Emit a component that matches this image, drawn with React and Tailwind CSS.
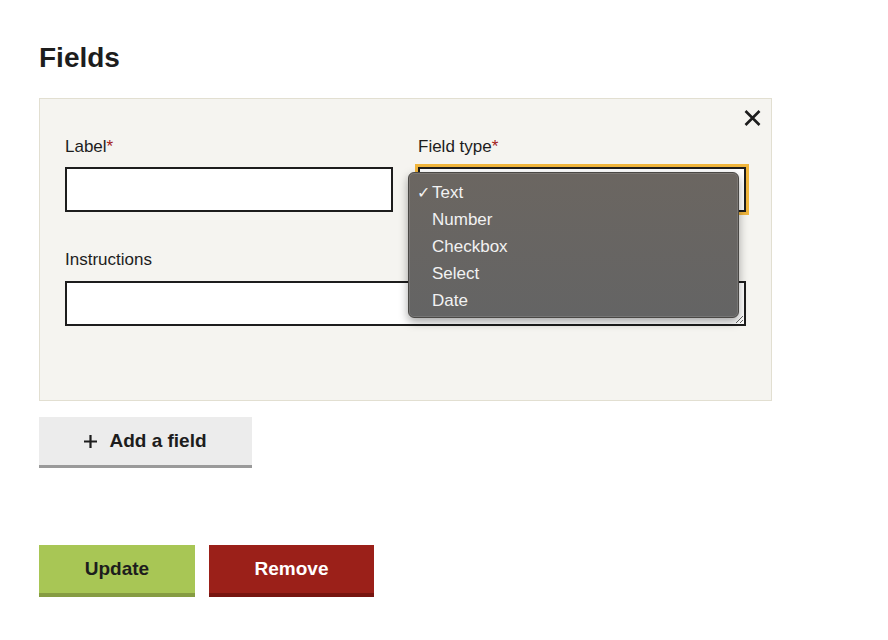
import React from "react";

export default function App() {
  const items = ["Text", "Number", "Checkbox", "Select", "Date"];
  return (
    <div className="min-h-[640px] w-[888px] bg-white pt-[38px] pl-[39px] text-[#1d1d1d]" style={{ fontFamily: '"Liberation Sans", Arial, sans-serif' }}>
      <h2 className="text-[28px] font-bold leading-[40px] text-[#1d1d1d]">Fields</h2>
      <div className="mt-[20px] w-[733px] border border-[#e2dfd1] bg-[#f5f4f0] px-[25px] pt-[11px] pb-[74px]">
        <div className="-mr-[15px] flex h-[16px] justify-end">
          <svg width="17" height="16" viewBox="0 0 17 16" className="block">
            <path d="M1.5 1 L15.5 15 M15.5 1 L1.5 15" stroke="#1d1d1d" strokeWidth="2.6" />
          </svg>
        </div>
        <div className="mt-[9px] grid grid-cols-[328px_328px] gap-x-[25px]">
          <div>
            <div className="mb-2 text-[17px] leading-[24px]">
              Label<span className="text-[#a3211a]">*</span>
            </div>
            <div className="h-[45px] border-2 border-[#1d1d1d] bg-white" />
          </div>
          <div className="relative">
            <div className="mb-2 text-[17px] leading-[24px]">
              Field type<span className="text-[#a3211a]">*</span>
            </div>
            <div className="h-[45px] border-2 border-[#1d1d1d] bg-white outline-[3px] outline-solid outline-[#f0b53c]" />
            <div className="absolute left-[-10px] top-[37px] z-10 h-[146px] w-[331px] rounded-[6px] border border-[#4a4845] bg-gradient-to-b from-[#6b6661] to-[#646464] pt-[6px] shadow-[0_4px_10px_rgba(0,0,0,0.35),inset_0_0_0_1px_rgba(255,255,255,0.12)]">
              {items.map((it, i) => (
                <div key={it} className="relative flex h-[27px] items-center pl-[23px] text-[17px] text-[#f2f2f2]">
                  {i === 0 && (
                    <span className="absolute left-[8px] text-[16px] text-[#f2f2f2]">✓</span>
                  )}
                  {it}
                </div>
              ))}
            </div>
          </div>
          <div className="col-span-2 mt-[36px]">
            <div className="mb-[9px] text-[17px] leading-[24px]">Instructions</div>
            <textarea className="block h-[45px] w-full resize-y border-2 border-[#1d1d1d] bg-white" />
          </div>
        </div>
      </div>
      <button className="mt-[16px] flex h-[51px] w-[213px] items-center justify-center gap-[12px] border-b-[3px] border-[#9a9a9a] bg-[#ececec] text-[19px] font-bold text-[#1d1d1d]">
        <svg width="13" height="13" viewBox="0 0 13 13">
          <path d="M6.5 0 V13 M0 6.5 H13" stroke="#1d1d1d" strokeWidth="2.2" />
        </svg>
        <span>Add a field</span>
      </button>
      <div className="mt-[77px] flex gap-[14px]">
        <button className="flex h-[52px] w-[156px] items-center justify-center border-b-4 border-[#869c42] bg-[#a8c655] text-[19px] font-bold text-[#1d1d1d]">
          Update
        </button>
        <button className="flex h-[52px] w-[165px] items-center justify-center border-b-4 border-[#771510] bg-[#9b2019] text-[19px] font-bold text-white">
          Remove
        </button>
      </div>
    </div>
  );
}
